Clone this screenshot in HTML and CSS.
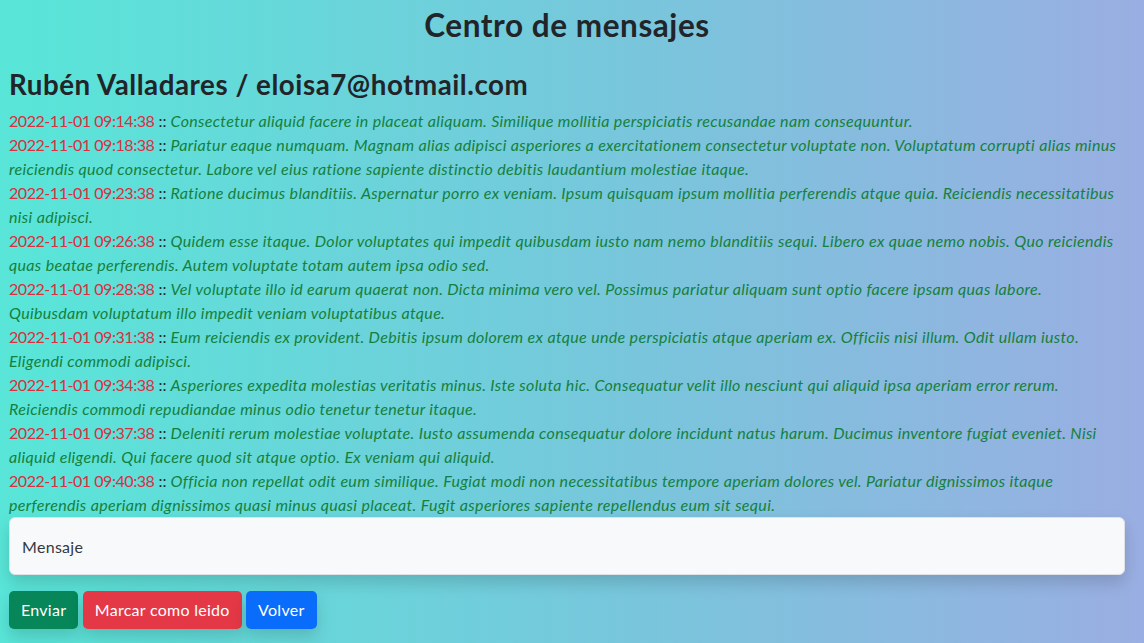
FILE: index.html
```html
<!DOCTYPE html>
<html lang="es">
<head>
<meta charset="utf-8">
<title>Centro de mensajes</title>
<link rel="stylesheet" href="styles.css">
</head>
<body>
<main class="page">
  <h2 class="title">Centro de mensajes</h2>
  <h3 class="user">Rubén Valladares / eloisa7@hotmail.com</h3>
  <div class="messages">
    <div class="msg"><span class="date">2022-11-01 09:14:38</span> :: <em class="text">Consectetur aliquid facere in placeat aliquam. Similique mollitia perspiciatis recusandae nam consequuntur.</em></div>
    <div class="msg"><span class="date">2022-11-01 09:18:38</span> :: <em class="text">Pariatur eaque numquam. Magnam alias adipisci asperiores a exercitationem consectetur voluptate non. Voluptatum corrupti alias minus reiciendis quod consectetur. Labore vel eius ratione sapiente distinctio debitis laudantium molestiae itaque.</em></div>
    <div class="msg"><span class="date">2022-11-01 09:23:38</span> :: <em class="text">Ratione ducimus blanditiis. Aspernatur porro ex veniam. Ipsum quisquam ipsum mollitia perferendis atque quia. Reiciendis necessitatibus nisi adipisci.</em></div>
    <div class="msg"><span class="date">2022-11-01 09:26:38</span> :: <em class="text">Quidem esse itaque. Dolor voluptates qui impedit quibusdam iusto nam nemo blanditiis sequi. Libero ex quae nemo nobis. Quo reiciendis quas beatae perferendis. Autem voluptate totam autem ipsa odio sed.</em></div>
    <div class="msg"><span class="date">2022-11-01 09:28:38</span> :: <em class="text">Vel voluptate illo id earum quaerat non. Dicta minima vero vel. Possimus pariatur aliquam sunt optio facere ipsam quas labore. Quibusdam voluptatum illo impedit veniam voluptatibus atque.</em></div>
    <div class="msg"><span class="date">2022-11-01 09:31:38</span> :: <em class="text">Eum reiciendis ex provident. Debitis ipsum dolorem ex atque unde perspiciatis atque aperiam ex. Officiis nisi illum. Odit ullam iusto. Eligendi commodi adipisci.</em></div>
    <div class="msg"><span class="date">2022-11-01 09:34:38</span> :: <em class="text">Asperiores expedita molestias veritatis minus. Iste soluta hic. Consequatur velit illo nesciunt qui aliquid ipsa aperiam error rerum. Reiciendis commodi repudiandae minus odio tenetur tenetur itaque.</em></div>
    <div class="msg"><span class="date">2022-11-01 09:37:38</span> :: <em class="text">Deleniti rerum molestiae voluptate. Iusto assumenda consequatur dolore incidunt natus harum. Ducimus inventore fugiat eveniet. Nisi aliquid eligendi. Qui facere quod sit atque optio. Ex veniam qui aliquid.</em></div>
    <div class="msg"><span class="date">2022-11-01 09:40:38</span> :: <em class="text">Officia non repellat odit eum similique. Fugiat modi non necessitatibus tempore aperiam dolores vel. Pariatur dignissimos itaque perferendis aperiam dignissimos quasi minus quasi placeat. Fugit asperiores sapiente repellendus eum sit sequi.</em></div>
  </div>
  <form class="composer">
    <input class="field" type="text" placeholder="Mensaje">
    <div class="actions">
      <button type="button" class="btn btn-send">Enviar</button>
      <button type="button" class="btn btn-read">Marcar como leido</button>
      <button type="button" class="btn btn-back">Volver</button>
    </div>
  </form>
</main>
</body>
</html>
```

FILE: styles.css
```css
html, body {
  margin: 0;
  height: 100%;
}
body {
  background: linear-gradient(to right, #58e6d8 0%, #78c6dc 55%, #9aaee2 100%);
  font-family: "Lato", "Noto Sans", sans-serif;
  color: #212529;
  font-size: 16px;
  line-height: 1.5;
}
.page {
  padding: 6px 19px 0 9px;
}
.title {
  margin: 0 0 24px;
  font-size: 31.5px;
  font-weight: 700;
  line-height: 38px;
  letter-spacing: 0.55px;
  text-align: center;
}
.user {
  margin: 0 0 8px;
  font-size: 27.7px;
  font-weight: 700;
  line-height: 33px;
  letter-spacing: 0.55px;
}
.messages {
  line-height: 24px;
}
.date {
  color: #d8303f;
  letter-spacing: -0.45px;
}
.text {
  color: #15803d;
  letter-spacing: 0.33px;
}
.composer {
  margin: 0;
}
.field {
  display: block;
  box-sizing: border-box;
  width: 100%;
  height: 58px;
  padding: 0 12px;
  border: 1px solid #dee2e6;
  border-radius: 6px;
  background: #f8f9fa;
  font: inherit;
  letter-spacing: 0.3px;
  color: #212529;
  box-shadow: 0 8px 16px rgba(0, 0, 0, 0.15);
}
.field::placeholder {
  color: #343a40;
  opacity: 1;
}
.actions {
  display: flex;
  gap: 4.5px;
  margin-top: 16px;
}
.btn {
  height: 38px;
  padding: 0 12px;
  border: none;
  border-radius: 5px;
  font: inherit;
  letter-spacing: 0.27px;
  color: #fff;
  box-shadow: 0 8px 16px rgba(0, 0, 0, 0.15);
}
.btn-send { background: #068659; }
.btn-read { background: #e43846; }
.btn-back { background: #0a6cfb; }
```
